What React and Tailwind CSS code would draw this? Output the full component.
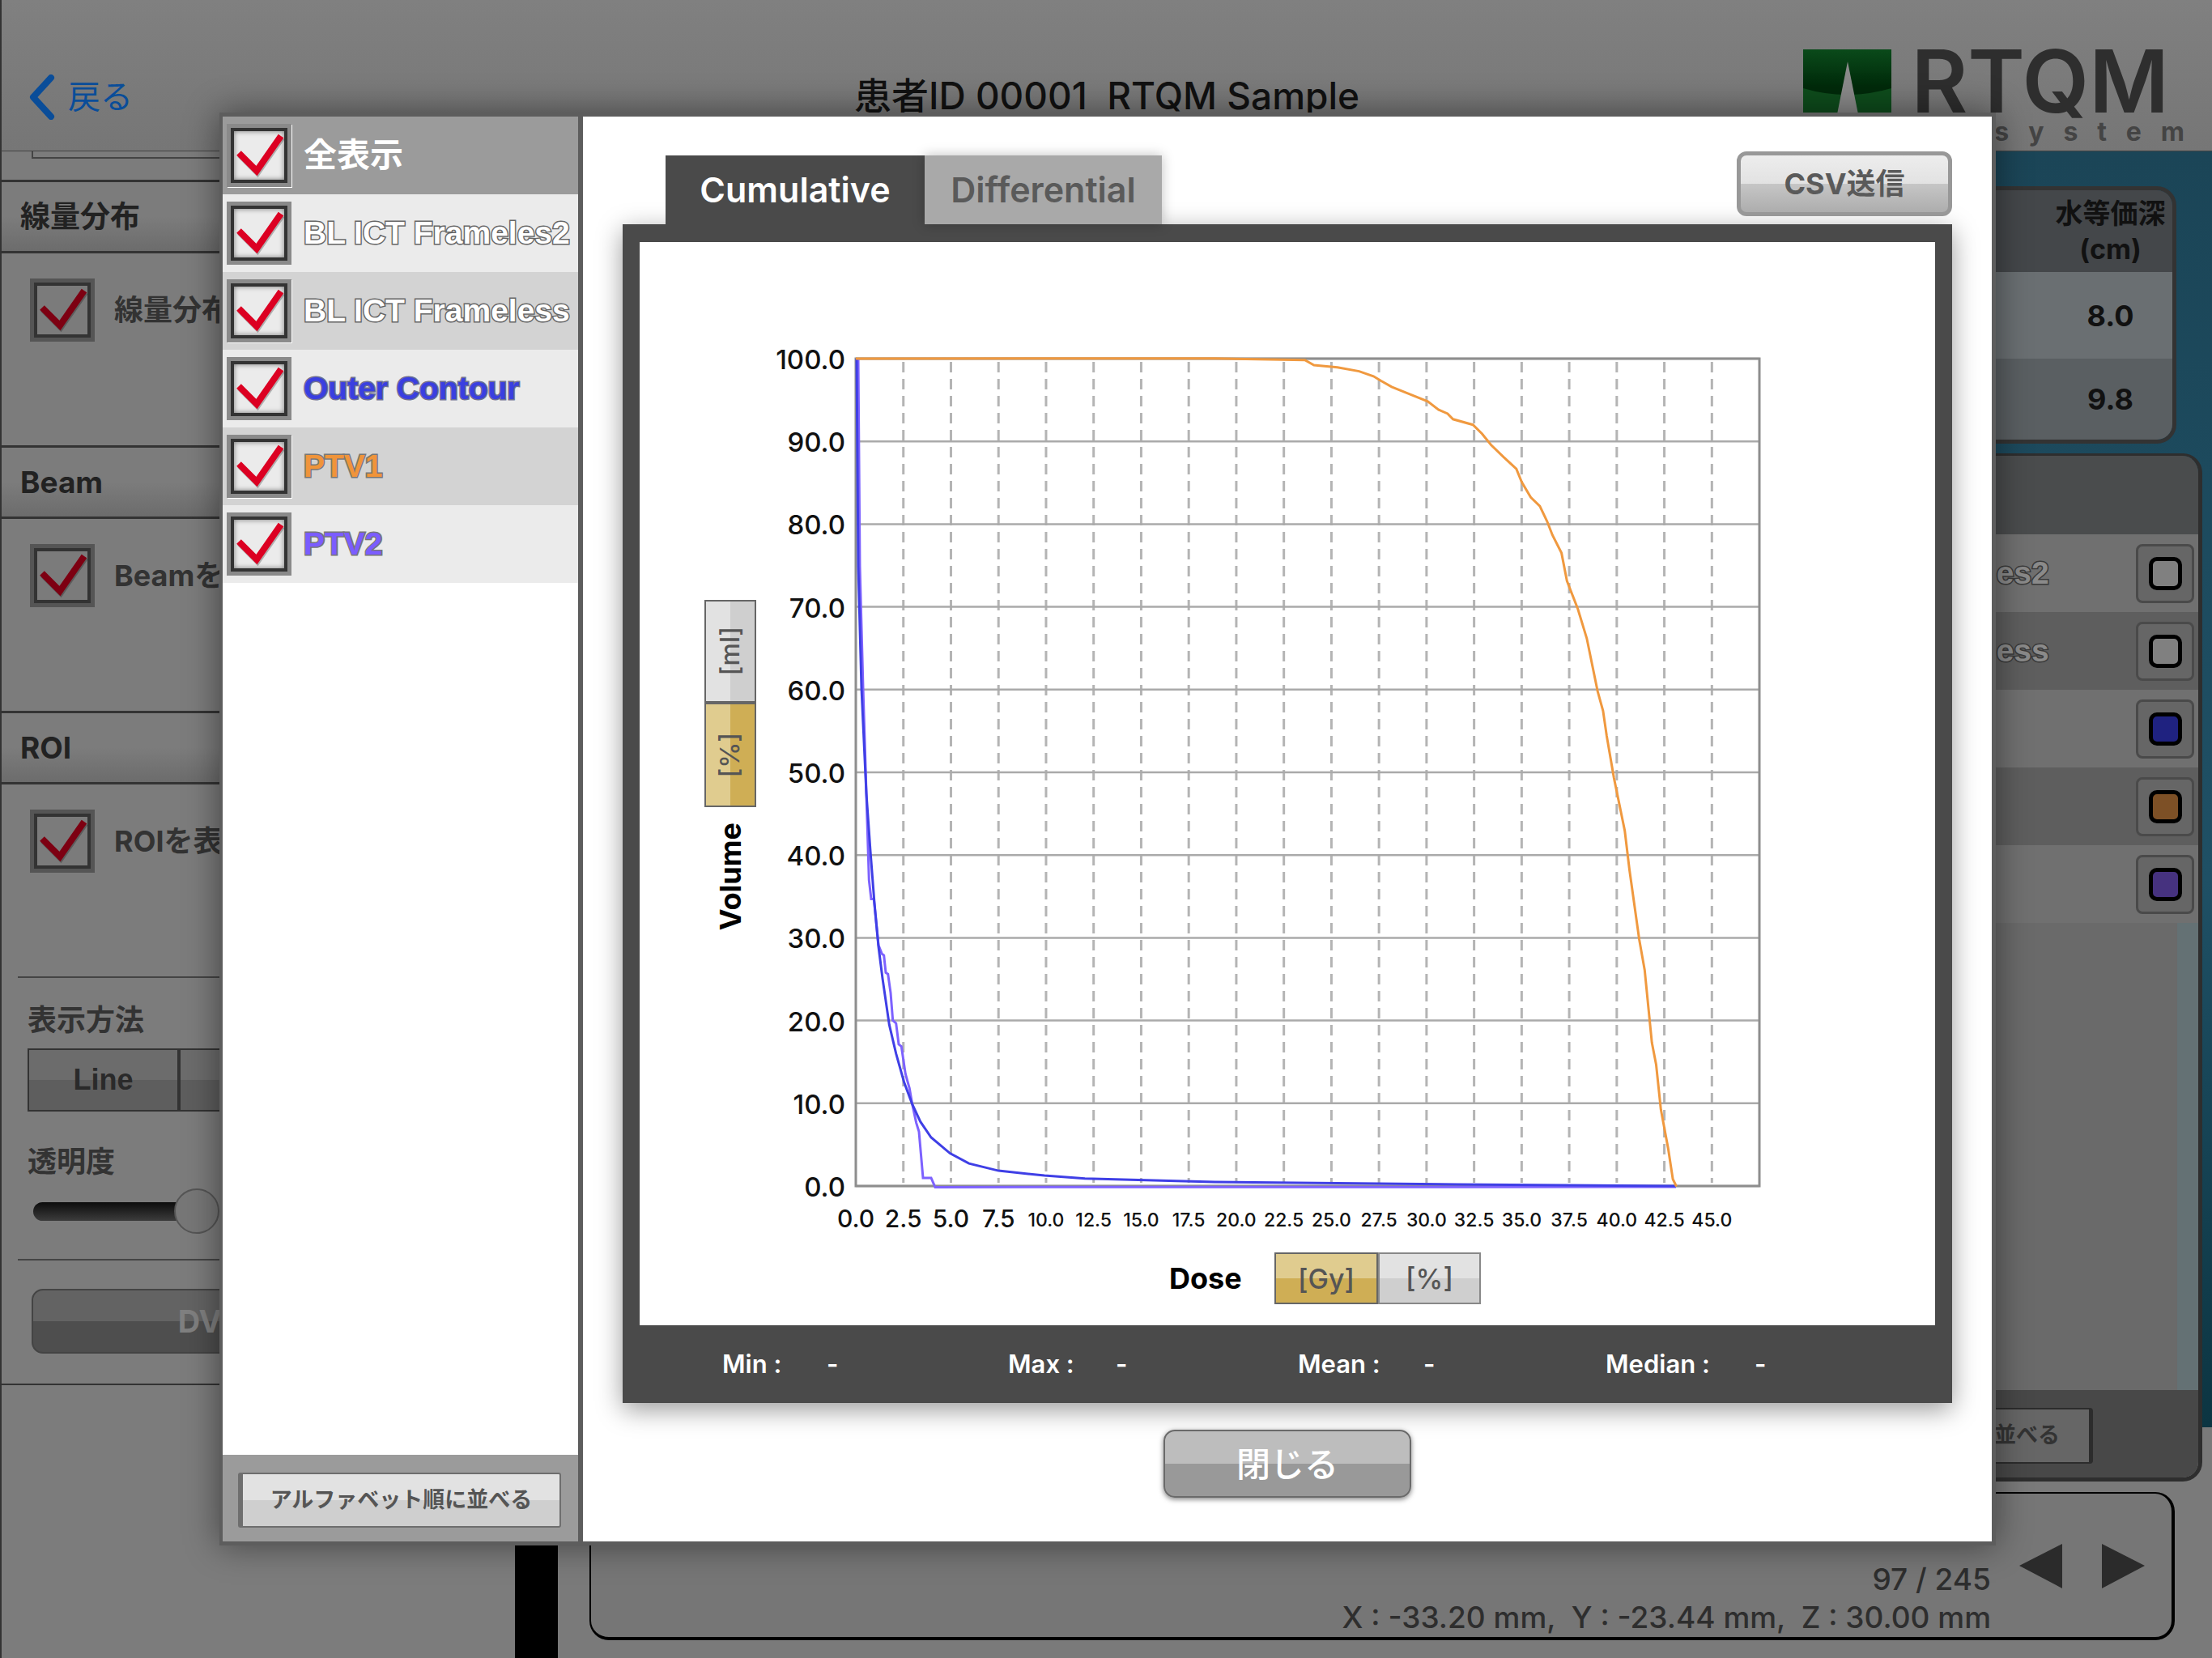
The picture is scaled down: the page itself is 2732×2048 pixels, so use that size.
import React from "react";

const VOLUME_TICKS = [100, 90, 80, 70, 60, 50, 40, 30, 20, 10, 0];
const DOSE_TICKS = Array.from({ length: 19 }, (_, i) => i * 2.5);
const X0 = 1057;
const X_STEP = 58.74;
const Y0 = 443;
const Y_STEP = 102.2;

const fromZoom = (pts, ox, oy, sx, sy) =>
  pts.map(([x, y]) => `${(ox + x / sx).toFixed(1)},${(oy + y / sy).toFixed(1)}`).join(" ");

const ORANGE =
  "1057,443 " +
  fromZoom(
    [
      [0, 33], [250, 36], [275, 45], [340, 49], [400, 56], [440, 65], [460, 73], [490, 84], [540, 97],
      [590, 110], [620, 125], [645, 132], [660, 142], [715, 152], [740, 168], [765, 188], [800, 210],
      [835, 231], [850, 255], [875, 282], [900, 298], [920, 325], [935, 350], [960, 382], [975, 432],
      [1005, 482], [1030, 535], [1060, 630], [1075, 665], [1085, 710], [1105, 785], [1135, 880],
      [1148, 950], [1175, 1075], [1190, 1130], [1210, 1260], [1222, 1300], [1235, 1380], [1255, 1450],
      [1268, 1505], [1278, 1518],
    ],
    1500, 420, 2.24, 1.452
  );

const BLUE =
  "1058,443 1060,700 1064,850 " +
  fromZoom(
    [
      [690, 0], [705, 200], [720, 380], [735, 530], [750, 640], [775, 800], [800, 900], [830, 1000],
      [860, 1075], [890, 1135], [930, 1190], [1000, 1245], [1070, 1280], [1180, 1305], [1350, 1322], [1500, 1332],
    ],
    840, 980, 3, 2.8
  ) +
  " 1500,1460 1800,1463 2070,1465";

const PURPLE =
  "1060,443 1062,700 1066,850 " +
  fromZoom(
    [
      [690, 0], [700, 300], [708, 365], [718, 365], [735, 525], [748, 555], [755, 560], [762, 620],
      [770, 625], [780, 690], [788, 785], [800, 795], [810, 868], [820, 875], [835, 970], [850, 1020],
      [860, 1075], [875, 1140], [885, 1170], [900, 1330], [930, 1330], [945, 1362],
    ],
    840, 980, 3, 2.8
  ) +
  " 2070,1466";

const ROI_ROWS = [
  { name: "BL ICT Frameles2", bg: "bg-[#ebebeb]", text: "text-white [-webkit-text-stroke:3px_#666]" },
  { name: "BL ICT Frameless", bg: "bg-[#d3d3d3]", text: "text-white [-webkit-text-stroke:3px_#666]", edge: true },
  { name: "Outer Contour", bg: "bg-[#ebebeb]", text: "text-[#3a3fe0] [-webkit-text-stroke:3px_#6f7090]" },
  { name: "PTV1", bg: "bg-[#d3d3d3]", text: "text-[#f0943a] [-webkit-text-stroke:3px_#777]", edge: true },
  { name: "PTV2", bg: "bg-[#ebebeb]", text: "text-[#7b5cff] [-webkit-text-stroke:3px_#777]" },
];

const DIM_ROWS = [
  { name: "BL ICT Frameles2", bg: "bg-[#707070]", pad: "pl-[46px]", text: "text-[#8a8a8a] [-webkit-text-stroke:3px_#3a3a3a]", swatch: "bg-[#808080]" },
  { name: "BL ICT Frameless", bg: "bg-[#5e5e5e]", pad: "pl-[46px]", text: "text-[#8a8a8a] [-webkit-text-stroke:3px_#3a3a3a]", swatch: "bg-[#808080]" },
  { name: "Outer Contour", bg: "bg-[#707070]", pad: "pl-0", text: "text-[#1f2280] [-webkit-text-stroke:3px_#38384a]", swatch: "bg-[#1f2280]" },
  { name: "PTV1", bg: "bg-[#5e5e5e]", pad: "pl-0", text: "text-[#7d5026]", swatch: "bg-[#7d5026]" },
  { name: "PTV2", bg: "bg-[#707070]", pad: "pl-0", text: "text-[#46327f]", swatch: "bg-[#46327f]" },
];

const STATS = [
  { label: "Min :", col: "w-[353px]", lab: "w-[129px]" },
  { label: "Max :", col: "w-[358px]", lab: "w-[133px]" },
  { label: "Mean :", col: "w-[380px]", lab: "w-[155px]" },
  { label: "Median :", col: "w-[300px]", lab: "w-[184px]" },
];

function CheckBox({ checked = true, dim = false, edge = false }) {
  return (
    <div
      className={`w-[80px] h-[78px] shrink-0 border-[5px] ${dim ? "border-[#555]" : "border-[#8a8a8a]"} ${
        edge ? "shadow-[1px_1px_0_#fff]" : ""
      }`}
    >
      <div
        className={`h-full flex items-center justify-center border-[4px] border-[#333] ${
          dim ? "bg-[#7b7b7b]" : "bg-[#ebebeb] shadow-[inset_0_0_6px_rgba(0,0,0,0.5)]"
        }`}
      >
        {checked && (
          <svg viewBox="9 9 62 60" className="w-[62px] h-[60px]">
            <polyline points="15,36 37,58 67,15" fill="none" stroke="rgba(0,0,0,0.25)" strokeWidth="8" transform="translate(1,2)" />
            <polyline points="15,36 37,58 67,15" fill="none" stroke={dim ? "#7d0012" : "#dc0022"} strokeWidth="8" />
          </svg>
        )}
      </div>
    </div>
  );
}

function SectionHeader({ children }) {
  return (
    <div className="h-[91px] pl-[23px] flex items-center border-y-[3px] border-[#333] bg-[linear-gradient(#7c7c7c_50%,#6c6c6c)] text-[37px] font-bold text-[#222]">
      {children}
    </div>
  );
}

function SideOption({ label, checked }) {
  return (
    <div className="h-[237px] pt-[31px] pl-[35px] flex items-start gap-[24px]">
      <CheckBox checked={checked} dim />
      <span className="h-[78px] leading-[78px] text-[36px] font-bold text-[#333]">{label}</span>
    </div>
  );
}

function Sidebar() {
  return (
    <aside className="w-[636px] shrink-0 border-l-2 border-[#333] bg-[#7c7c7c]">
      <div className="h-[9px] ml-[37px] border-l-2 border-b-2 border-[#444]" />
      <div className="h-[26px]" />
      <SectionHeader>線量分布</SectionHeader>
      <SideOption label="線量分布を表示" checked />
      <SectionHeader>Beam</SectionHeader>
      <SideOption label="Beamを表示" />
      <SectionHeader>ROI</SectionHeader>
      <SideOption label="ROIを表示" checked />

      <div className="ml-[20px] border-t-2 border-[#444] pl-[12px] h-[349px]">
        <div className="h-[87px] pt-[28px] text-[36px] leading-[48px] font-bold text-[#333]">表示方法</div>
        <div className="flex">
          <div className="w-[187px] h-[78px] flex items-center justify-center border-2 border-[#333] bg-[linear-gradient(#6c6c6c_50%,#5e5e5e_50%)] text-[36px] font-bold text-[#2a2a2a] [font-family:'Liberation_Sans',sans-serif]">
            Line
          </div>
          <div className="w-[187px] h-[78px] border-2 border-[#333] bg-[linear-gradient(#6c6c6c_50%,#5e5e5e_50%)]" />
        </div>
        <div className="mt-[38px] h-[48px] text-[36px] leading-[48px] font-bold text-[#333]">透明度</div>
        <div className="mt-[9px] ml-[7px] w-[300px] h-[56px] flex items-center">
          <div className="w-[180px] h-[23px] rounded-l-full bg-[linear-gradient(#0c0c0c,#3c3c3c)]" />
          <div className="w-[56px] h-[56px] -ml-[6px] rounded-full border-2 border-[#555] bg-[#777]" />
        </div>
      </div>

      <div className="ml-[20px] border-t-2 border-[#444] h-[154px] pt-[35px] pl-[17px]">
        <div className="w-[558px] h-[80px] rounded-[14px] border-2 border-[#444] bg-[linear-gradient(#636363_50%,#4e4e4e_50%)] flex items-center justify-center text-[38px] font-bold text-[#808080]">
          DVHを表示
        </div>
      </div>
      <div className="-ml-[20px] border-t-2 border-[#333]" />
    </aside>
  );
}

function Logo() {
  return (
    <svg viewBox="0 0 109 110" className="w-[109px] h-[110px] shrink-0">
      <defs>
        <linearGradient id="logoGreen" x1="0" y1="0" x2="0" y2="1">
          <stop offset="0" stopColor="#0a4a1a" />
          <stop offset="0.42" stopColor="#002a0a" />
        </linearGradient>
      </defs>
      <rect width="109" height="110" fill="url(#logoGreen)" />
      <path d="M0 48 Q54 64 109 48 V110 H0 Z" fill="#0e4c1c" />
      <path d="M55 15 L74 110 H36 Z" fill="#8a8a8a" />
    </svg>
  );
}

function TopBar() {
  return (
    <header className="h-[187px] grid grid-cols-[1fr_auto_1fr] border-b border-[#444] bg-[linear-gradient(#808080,#767676)] border-l-2 border-l-[#333]">
      <div className="pt-[92px] pl-[33px] flex items-start gap-[16px] text-[#0a4d99]">
        <svg viewBox="0 0 33 56" className="w-[33px] h-[56px]">
          <polyline points="28,4 6,28 28,52" fill="none" stroke="#0a4d99" strokeWidth="8" strokeLinecap="round" strokeLinejoin="round" />
        </svg>
        <span className="text-[40px] leading-[56px]">戻る</span>
      </div>
      <div className="pt-[88px] text-[46px] leading-[60px] font-medium text-[#111] whitespace-pre">患者ID 00001  RTQM Sample</div>
      <div className="pt-[61px] pr-[53px] flex justify-end items-start gap-[25px]">
        <Logo />
        <div className="flex flex-col items-end">
          <div className="h-[78px] leading-[78px] text-[107px] font-semibold text-[#2e2e2e]">RTQM</div>
          <div className="mt-[6px] h-[36px] leading-[36px] text-[32px] font-bold tracking-[24px] text-[#444] -mr-[43px]">system</div>
        </div>
      </div>
    </header>
  );
}

function RightColumn() {
  return (
    <div className="w-[576px] shrink-0 h-full overflow-visible bg-[linear-gradient(#1b4557_0,#1f5065_900px,#0c3542_1576px,transparent_1576px)]">
      <div className="h-[43px]" />
      <div className="mr-[44px] h-[318px] border-[5px] border-[#333] rounded-[24px] overflow-hidden text-[#111] font-bold">
        <div className="h-[101px] pr-[8px] flex flex-col items-end bg-[#44474a] text-[34px] leading-[44px] justify-center">
          <div className="w-[137px] text-center whitespace-nowrap flex flex-col items-center">
            <span>水等価深</span>
            <span>(cm)</span>
          </div>
        </div>
        <div className="h-[107px] pr-[8px] flex items-center justify-end bg-[#6a6f72] text-[36px]">
          <span className="w-[137px] text-center">8.0</span>
        </div>
        <div className="h-[100px] pr-[8px] flex items-center justify-end bg-[#5a5f62] text-[36px]">
          <span className="w-[137px] text-center">9.8</span>
        </div>
      </div>

      <div className="mt-[12px] mr-[12px] h-[1270px] flex flex-col border-r-[5px] border-b-[5px] border-t-[3px] border-[#2e2e2e] rounded-[24px] overflow-hidden">
        <div className="h-[97px] bg-[#4a4c4d]" />
        {DIM_ROWS.map((row) => (
          <div key={row.name} className={`h-[96px] flex items-center justify-between pr-[5px] ${row.bg} ${row.pad}`}>
            <span className={`text-[39px] font-bold whitespace-nowrap [font-family:'Liberation_Sans',sans-serif] [paint-order:stroke_fill] ${row.text}`}>
              {row.name}
            </span>
            <div className="w-[72px] h-[73px] flex items-center justify-center rounded-[8px] border-[3px] border-[#4a4a4a] bg-[#666]">
              <div className={`w-[41px] h-[41px] rounded-[10px] border-[5px] border-black ${row.swatch}`} />
            </div>
          </div>
        ))}
        <div className="flex-1 bg-[linear-gradient(90deg,#6a6a6a_533px,#647174_533px)]" />
        <div className="h-[108px] pt-[22px] bg-[#484848] flex justify-end pr-[130px]">
          <div className="h-[69px] pr-[36px] pl-[20px] flex items-center rounded-[4px] border-2 border-r-[5px] border-[#2c2c2c] bg-[#666] text-[27px] font-bold text-[#333]">
            アルファベット順に並べる
          </div>
        </div>
      </div>
    </div>
  );
}

function BottomPanel() {
  return (
    <div className="mt-[13px] ml-[39px] mr-[46px] h-[183px] flex border-2 border-r-[4px] border-b-[4px] border-black rounded-[24px] bg-[#767676]">
      <svg viewBox="0 0 40 24" className="w-[40px] h-[24px] ml-[679px] mt-[45px] shrink-0">
        <path d="M6 2 A18 18 0 0 0 34 2" fill="none" stroke="#444" strokeWidth="2" />
      </svg>
      <div className="ml-auto pt-[82px] flex flex-col items-end text-[37px] leading-[47px] font-medium text-[#2e2e2e] whitespace-pre">
        <span>97 / 245</span>
        <span>X : -33.20 mm,  Y : -23.44 mm,  Z : 30.00 mm</span>
      </div>
      <div className="ml-[35px] mr-[33px] mt-[62px] flex items-start gap-[49px]">
        <svg viewBox="0 0 53 55" className="w-[53px] h-[55px]">
          <polygon points="0,27 53,0 53,55" fill="#2b2b2b" />
        </svg>
        <svg viewBox="0 0 53 55" className="w-[53px] h-[55px]">
          <polygon points="53,27 0,0 0,55" fill="#2b2b2b" />
        </svg>
      </div>
    </div>
  );
}

function Chart() {
  return (
    <svg viewBox="934 299 1456 1231" className="w-[1456px] h-[1231px] shrink-0">
      {DOSE_TICKS.slice(1).map((d, i) => (
        <line
          key={d}
          x1={X0 + (i + 1) * X_STEP}
          x2={X0 + (i + 1) * X_STEP}
          y1={Y0 + 4}
          y2={Y0 + 1018}
          stroke="#b4b4b4"
          strokeWidth="3"
          strokeDasharray="13 8"
        />
      ))}
      {VOLUME_TICKS.map((v, i) => (
        <line key={v} x1={X0} x2="2173" y1={Y0 + i * Y_STEP} y2={Y0 + i * Y_STEP} stroke="#aaaaaa" strokeWidth="2.5" />
      ))}
      <rect x={X0} y={Y0} width={2173 - X0} height={1465 - Y0} fill="none" stroke="#8e8e8e" strokeWidth="3" />
      <polyline points={PURPLE} fill="none" stroke="#7d62ff" strokeWidth="3" />
      <polyline points={BLUE} fill="none" stroke="#3f3fe6" strokeWidth="3" />
      <polyline points={ORANGE} fill="none" stroke="#f0993f" strokeWidth="3" />

      {VOLUME_TICKS.map((v, i) => (
        <text key={v} x="1044" y={Y0 + i * Y_STEP + 13} textAnchor="end" fontSize="33" fontWeight="500" fill="#111">
          {v.toFixed(1)}
        </text>
      ))}
      {DOSE_TICKS.map((d, i) => (
        <text
          key={d}
          x={X0 + i * X_STEP}
          y={d < 10 ? 1516 : 1515}
          textAnchor="middle"
          fontSize={d < 10 ? 30 : 23}
          fontWeight="500"
          fill="#111"
        >
          {d.toFixed(1)}
        </text>
      ))}
    </svg>
  );
}

function DvhModal() {
  return (
    <div className="absolute left-[271px] top-[139px] w-[2194px] h-[1770px] flex gap-[6px] pt-[5px] pb-[5px] pl-[4px] pr-[5px] bg-[#5d5d5d] shadow-[0_0_40px_rgba(0,0,0,0.45)]">
      {/* ROI list */}
      <div className="w-[439px] shrink-0 flex flex-col bg-white">
        <div className="h-[96px] pl-[5px] flex items-center gap-[15px] bg-[#9b9b9b]">
          <CheckBox edge />
          <span className="text-[41px] font-bold text-white">全表示</span>
        </div>
        {ROI_ROWS.map((row) => (
          <div key={row.name} className={`h-[96px] pl-[5px] flex items-center gap-[15px] ${row.bg}`}>
            <CheckBox edge={row.edge} />
            <span className={`text-[39px] font-bold whitespace-nowrap [font-family:'Liberation_Sans',sans-serif] [paint-order:stroke_fill] ${row.text}`}>
              {row.name}
            </span>
          </div>
        ))}
        <div className="flex-1" />
        <div className="h-[107px] pt-[22px] pl-[19px] bg-[#9b9b9b]">
          <div className="w-[399px] h-[68px] flex items-center justify-center rounded-[3px] border-2 border-l-[6px] border-[#6e6e6e] bg-[linear-gradient(#e2e2e2_50%,#cfcfcf_50%)] text-[27px] font-bold text-[#555]">
            アルファベット順に並べる
          </div>
        </div>
      </div>

      {/* DVH */}
      <div className="w-[1740px] pt-[48px] px-[49px] bg-white">
        <div className="h-[85px] flex items-start pl-[53px]">
          <div className="w-[320px] h-[85px] flex items-center justify-center bg-[#4a4a4a] text-[43px] font-semibold text-white">
            Cumulative
          </div>
          <div className="w-[293px] h-[85px] flex items-center justify-center bg-[#a9a9a9] text-[43px] font-semibold text-[#5a5a5a] shadow-[0_0_14px_rgba(0,0,0,0.25)]">
            Differential
          </div>
          <div className="ml-auto -mt-[5px] w-[266px] h-[80px] flex items-center justify-center rounded-[12px] border-[5px] border-[#989898] bg-[linear-gradient(#ededed,#e2e2e2_50%,#c6c6c6_50%,#adadad)] text-[36px] font-bold text-[#5a5a5a]">
            CSV送信
          </div>
        </div>

        <div className="h-[1456px] pt-[22px] px-[21px] bg-[#4a4a4a] shadow-[0_8px_30px_rgba(0,0,0,0.4)]">
          <div className="h-[1338px] flex flex-col bg-white">
            <div className="flex">
              <div className="w-[144px] shrink-0 pt-[442px] pl-[80px] flex flex-col items-start">
                <div className="w-[64px] h-[127px] flex items-center justify-center border-2 border-[#666] bg-[linear-gradient(90deg,#e2e2e2_50%,#cfcfcf_50%)] text-[32px] font-medium text-[#555]">
                  <span className="[writing-mode:vertical-rl] rotate-180">[ml]</span>
                </div>
                <div className="w-[64px] h-[129px] flex items-center justify-center border-2 border-[#666] bg-[linear-gradient(90deg,#e0cc8f_50%,#cfae55_50%)] text-[32px] font-medium text-[#555]">
                  <span className="[writing-mode:vertical-rl] rotate-180">[%]</span>
                </div>
                <div className="w-[64px] mt-[19px] flex justify-center text-[36px] font-bold text-black">
                  <span className="[writing-mode:vertical-rl] rotate-180">Volume</span>
                </div>
              </div>
              <Chart />
            </div>
            <div className="mt-[17px] pl-[654px] flex items-center">
              <span className="w-[130px] text-[36px] font-bold text-black">Dose</span>
              <div className="w-[128px] h-[64px] flex items-center justify-center border-2 border-[#666] bg-[linear-gradient(#e0cc8f_50%,#cfae55_50%)] text-[34px] font-medium text-[#555]">
                [Gy]
              </div>
              <div className="w-[127px] h-[64px] flex items-center justify-center border-2 border-[#888] bg-[linear-gradient(#e2e2e2_50%,#cfcfcf_50%)] text-[34px] font-medium text-[#555]">
                [%]
              </div>
            </div>
          </div>
          <div className="h-[96px] pl-[102px] flex items-center text-[31px] font-semibold text-white">
            {STATS.map((s) => (
              <div key={s.label} className={`flex ${s.col}`}>
                <span className={s.lab}>{s.label}</span>
                <span>-</span>
              </div>
            ))}
          </div>
        </div>

        <div className="mt-[33px] ml-[668px] w-[306px] h-[84px] flex items-center justify-center rounded-[14px] border-2 border-[#6a6a6a] bg-[linear-gradient(#bdbdbd_50%,#999999_50%)] shadow-[0_2px_6px_rgba(0,0,0,0.5)] text-[42px] font-medium text-white">
          閉じる
        </div>
      </div>
    </div>
  );
}

export default function App() {
  return (
    <div className="relative w-[2732px] h-[2048px] overflow-hidden bg-[#7a7a7a] [font-family:Inter,'Noto_Sans_CJK_JP',sans-serif]">
      <TopBar />
      <div className="flex h-[1861px]">
        <Sidebar />
        <div className="w-[53px] shrink-0 bg-black" />
        <main className="flex-1 flex flex-col">
          <div className="h-[1643px] flex justify-end">
            <RightColumn />
          </div>
          <BottomPanel />
        </main>
      </div>
      <DvhModal />
    </div>
  );
}
